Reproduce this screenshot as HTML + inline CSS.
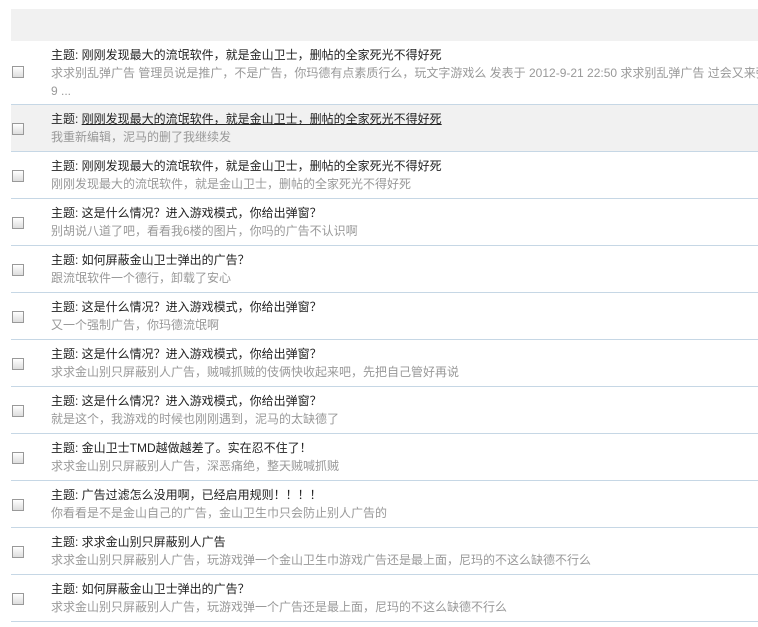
<!DOCTYPE html>
<html><head><meta charset="utf-8"><style>
body{margin:0;background:#fff;font-family:"Liberation Sans","Noto Sans CJK SC",sans-serif;font-size:12px;}
.hd{position:absolute;left:11px;top:9px;width:747px;height:32px;background:#f1f1f1;}
.list{position:absolute;left:11px;top:41px;width:747px;}
.row{position:relative;border-bottom:1px solid #c6d7e5;height:46px;}
.row.first{height:63px;}
.row.hl{background:#f1f1f1;}
.cb{position:absolute;left:1px;width:10px;height:10px;border:1px solid #999;background:linear-gradient(#fff,#ddd);top:18px;}
.first .cb{top:25px;}
.t{position:absolute;left:40px;top:5px;right:0;line-height:18px;}
.t1{color:#222;white-space:nowrap;}
.t2{color:#999;}
.hl .t1 span{text-decoration:underline;}
</style></head><body>
<div class="hd"></div>
<div class="list">
<div class="row first"><div class="cb"></div><div class="t"><div class="t1">主题: 刚刚发现最大的流氓软件，就是金山卫士，删帖的全家死光不得好死</div><div class="t2" style="white-space:nowrap;overflow:hidden">求求别乱弹广告 管理员说是推广，不是广告，你玛德有点素质行么，玩文字游戏么 发表于 2012-9-21 22:50 求求别乱弹广告 过会又来弹</div><div class="t2">9 ...</div></div></div>
<div class="row hl"><div class="cb"></div><div class="t"><div class="t1">主题: <span>刚刚发现最大的流氓软件，就是金山卫士，删帖的全家死光不得好死</span></div><div class="t2">我重新编辑，泥马的删了我继续发</div></div></div>
<div class="row"><div class="cb"></div><div class="t"><div class="t1">主题: 刚刚发现最大的流氓软件，就是金山卫士，删帖的全家死光不得好死</div><div class="t2">刚刚发现最大的流氓软件，就是金山卫士，删帖的全家死光不得好死</div></div></div>
<div class="row"><div class="cb"></div><div class="t"><div class="t1">主题: 这是什么情况？进入游戏模式，你给出弹窗？</div><div class="t2">别胡说八道了吧，看看我6楼的图片，你吗的广告不认识啊</div></div></div>
<div class="row"><div class="cb"></div><div class="t"><div class="t1">主题: 如何屏蔽金山卫士弹出的广告？</div><div class="t2">跟流氓软件一个德行，卸载了安心</div></div></div>
<div class="row"><div class="cb"></div><div class="t"><div class="t1">主题: 这是什么情况？进入游戏模式，你给出弹窗？</div><div class="t2">又一个强制广告，你玛德流氓啊</div></div></div>
<div class="row"><div class="cb"></div><div class="t"><div class="t1">主题: 这是什么情况？进入游戏模式，你给出弹窗？</div><div class="t2">求求金山别只屏蔽别人广告，贼喊抓贼的伎俩快收起来吧，先把自己管好再说</div></div></div>
<div class="row"><div class="cb"></div><div class="t"><div class="t1">主题: 这是什么情况？进入游戏模式，你给出弹窗？</div><div class="t2">就是这个，我游戏的时候也刚刚遇到，泥马的太缺德了</div></div></div>
<div class="row"><div class="cb"></div><div class="t"><div class="t1">主题: 金山卫士TMD越做越差了。实在忍不住了！</div><div class="t2">求求金山别只屏蔽别人广告，深恶痛绝，整天贼喊抓贼</div></div></div>
<div class="row"><div class="cb"></div><div class="t"><div class="t1">主题: 广告过滤怎么没用啊，已经启用规则！！！！</div><div class="t2">你看看是不是金山自己的广告，金山卫生巾只会防止别人广告的</div></div></div>
<div class="row"><div class="cb"></div><div class="t"><div class="t1">主题: 求求金山别只屏蔽别人广告</div><div class="t2">求求金山别只屏蔽别人广告，玩游戏弹一个金山卫生巾游戏广告还是最上面，尼玛的不这么缺德不行么</div></div></div>
<div class="row"><div class="cb"></div><div class="t"><div class="t1">主题: 如何屏蔽金山卫士弹出的广告？</div><div class="t2">求求金山别只屏蔽别人广告，玩游戏弹一个广告还是最上面，尼玛的不这么缺德不行么</div></div></div>
</div>
</body></html>
